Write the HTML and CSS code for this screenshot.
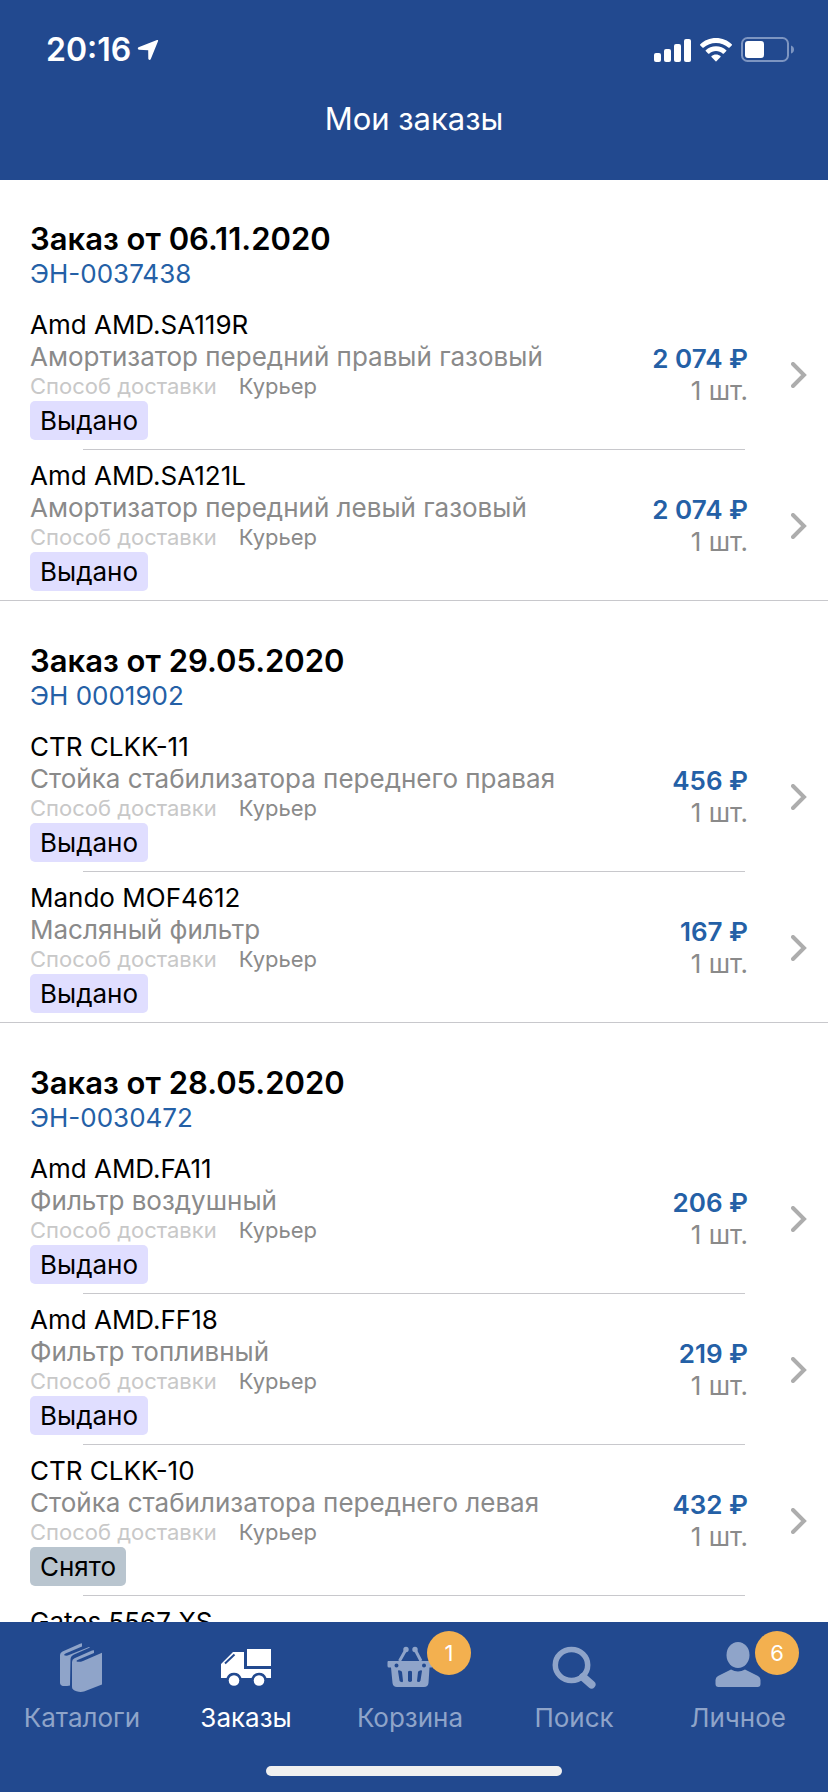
FILE: index.html
```html
<!DOCTYPE html>
<html lang="ru">

<head>
    <meta charset="UTF-8" />
    <meta name="viewport" content="width=device-width, initial-scale=1.0" />
    <title>Мои заказы</title>
    <link rel="stylesheet" href="styles.css">
</head>

<body>
    <header class="header">
        <div class="status-bar">
            <div class="status-left">
                <span class="time">20:16</span>
                <svg class="location" width="22" height="22" viewBox="0 0 22 22">
                    <path d="M1.5 8.2 20 1 Q21.6 .5 21 2.200L13.800 20Q13 21.600 11.700 20.600Q11.300 20.200 11.300 19.500L11.200 11.200 2 10.800Q.8 10.600.8 9.500.8 8.600 1.500 8.200Z" fill="#fff" />
                </svg>
            </div>
            <div class="status-right">
                <svg width="37" height="24" viewBox="0 0 37 24" fill="#fff">
                    <rect x="0" y="15" width="7" height="9" rx="2" />
                    <rect x="10" y="11" width="7" height="13" rx="2" />
                    <rect x="20" y="6" width="7" height="18" rx="2" />
                    <rect x="30" y="1" width="7" height="23" rx="2" />
                </svg>
                <svg width="32" height="24" viewBox="0 0 32 24" fill="#fff">
                    <path d="M16 0C22.200 0 27.800 2.300 32 6.400Q32.200 6.800 31.900 7.200L29.400 9.700Q29 10 28.600 9.700C25 6.500 20.700 4.900 16 4.900S7 6.500 3.400 9.700Q3 10 2.600 9.700L.1 7.200Q-.2 6.800.1 6.400C4.200 2.300 9.800 0 16 0Z" />
                    <path d="M16 8.200C20 8.200 23.500 9.700 26.300 12.200Q26.700 12.700 26.300 13.100L23.700 15.700Q23.300 16 22.900 15.700C20.900 14 18.600 13.100 16 13.100S11.100 14 9.100 15.700Q8.700 16 8.300 15.700L5.700 13.100Q5.300 12.700 5.700 12.200C8.500 9.700 12 8.200 16 8.200Z" />
                    <path d="M16 16.500C17.800 16.500 19.300 17.100 20.500 18.100Q20.900 18.500 20.500 19L16.400 23.200Q16 23.600 15.600 23.200L11.500 19Q11.100 18.500 11.500 18.100C12.700 17.100 14.200 16.500 16 16.500Z" />
                </svg>
                <svg width="53" height="25" viewBox="0 0 53 25">
                    <rect x="1" y="1" width="46" height="23" rx="5.500" fill="none" stroke="#7d95c1" stroke-width="2" />
                    <rect x="4" y="4" width="19" height="17" rx="3" fill="#fff" />
                    <path d="M50 8.500Q53 9.500 53 12.500T50 16.500Z" fill="#7d95c1" />
                </svg>
            </div>
        </div>
        <h1 class="page-title">Мои заказы</h1>
    </header>

    <main class="orders">
        <section class="order">
            <div class="order-head">
                <h2>Заказ от 06.11.2020</h2>
                <p>ЭН-0037438</p>
            </div>
            <ul>
                <li>
                    <a href="#" class="item">
                        <div class="info">
                            <div class="name">Amd AMD.SA119R</div>
                            <div class="desc">Амортизатор передний правый газовый</div>
                            <div class="delivery"><span>Способ доставки</span> <b>Курьер</b></div>
                            <span class="state">Выдано</span>
                        </div>
                        <div class="sum">
                            <div class="price">2 074 ₽</div>
                            <div class="count">1 шт.</div>
                        </div>
                        <svg class="chevron" viewBox="0 0 16 26"><path d="M2 2 13 13 2 24" /></svg>
                    </a>
                </li>
                <li>
                    <a href="#" class="item">
                        <div class="info">
                            <div class="name">Amd AMD.SA121L</div>
                            <div class="desc">Амортизатор передний левый газовый</div>
                            <div class="delivery"><span>Способ доставки</span> <b>Курьер</b></div>
                            <span class="state">Выдано</span>
                        </div>
                        <div class="sum">
                            <div class="price">2 074 ₽</div>
                            <div class="count">1 шт.</div>
                        </div>
                        <svg class="chevron" viewBox="0 0 16 26"><path d="M2 2 13 13 2 24" /></svg>
                    </a>
                </li>
            </ul>
        </section>

        <section class="order">
            <div class="order-head">
                <h2>Заказ от 29.05.2020</h2>
                <p>ЭН 0001902</p>
            </div>
            <ul>
                <li>
                    <a href="#" class="item">
                        <div class="info">
                            <div class="name">CTR CLKK-11</div>
                            <div class="desc">Стойка стабилизатора переднего правая</div>
                            <div class="delivery"><span>Способ доставки</span> <b>Курьер</b></div>
                            <span class="state">Выдано</span>
                        </div>
                        <div class="sum">
                            <div class="price">456 ₽</div>
                            <div class="count">1 шт.</div>
                        </div>
                        <svg class="chevron" viewBox="0 0 16 26"><path d="M2 2 13 13 2 24" /></svg>
                    </a>
                </li>
                <li>
                    <a href="#" class="item">
                        <div class="info">
                            <div class="name">Mando MOF4612</div>
                            <div class="desc">Масляный фильтр</div>
                            <div class="delivery"><span>Способ доставки</span> <b>Курьер</b></div>
                            <span class="state">Выдано</span>
                        </div>
                        <div class="sum">
                            <div class="price">167 ₽</div>
                            <div class="count">1 шт.</div>
                        </div>
                        <svg class="chevron" viewBox="0 0 16 26"><path d="M2 2 13 13 2 24" /></svg>
                    </a>
                </li>
            </ul>
        </section>

        <section class="order">
            <div class="order-head">
                <h2>Заказ от 28.05.2020</h2>
                <p>ЭН-0030472</p>
            </div>
            <ul>
                <li>
                    <a href="#" class="item">
                        <div class="info">
                            <div class="name">Amd AMD.FA11</div>
                            <div class="desc">Фильтр воздушный</div>
                            <div class="delivery"><span>Способ доставки</span> <b>Курьер</b></div>
                            <span class="state">Выдано</span>
                        </div>
                        <div class="sum">
                            <div class="price">206 ₽</div>
                            <div class="count">1 шт.</div>
                        </div>
                        <svg class="chevron" viewBox="0 0 16 26"><path d="M2 2 13 13 2 24" /></svg>
                    </a>
                </li>
                <li>
                    <a href="#" class="item">
                        <div class="info">
                            <div class="name">Amd AMD.FF18</div>
                            <div class="desc">Фильтр топливный</div>
                            <div class="delivery"><span>Способ доставки</span> <b>Курьер</b></div>
                            <span class="state">Выдано</span>
                        </div>
                        <div class="sum">
                            <div class="price">219 ₽</div>
                            <div class="count">1 шт.</div>
                        </div>
                        <svg class="chevron" viewBox="0 0 16 26"><path d="M2 2 13 13 2 24" /></svg>
                    </a>
                </li>
                <li>
                    <a href="#" class="item">
                        <div class="info">
                            <div class="name">CTR CLKK-10</div>
                            <div class="desc">Стойка стабилизатора переднего левая</div>
                            <div class="delivery"><span>Способ доставки</span> <b>Курьер</b></div>
                            <span class="state removed">Снято</span>
                        </div>
                        <div class="sum">
                            <div class="price">432 ₽</div>
                            <div class="count">1 шт.</div>
                        </div>
                        <svg class="chevron" viewBox="0 0 16 26"><path d="M2 2 13 13 2 24" /></svg>
                    </a>
                </li>
                <li>
                    <a href="#" class="item">
                        <div class="info">
                            <div class="name">Gates 5567 XS</div>
                        </div>
                    </a>
                </li>
            </ul>
        </section>
    </main>

    <footer class="footer">
        <nav class="tabs">
            <a href="#" class="tab">
                <svg viewBox="0 0 50 50">
                    <path d="M3 13Q3 10.500 5.500 9.500L23 1.700 25 1.300V4.500L8.500 11.500Q6 13 8 13.500 10 14 12 13L32 5 33 5.500 17 12.500Q13.500 14 13.500 17.500L13 43.500Q3 45.500 3 41Z" />
                    <path d="M15 20Q15 17.500 17.500 16.300L35 8.600 37 8.200V11L20.500 18Q18.500 19.200 20.500 19.700 23 20.200 26 19L45 10.800V42.500L27 49.500Q23.500 50.500 19.500 49.300 15 48 15 45Z" />
                </svg>
                <span>Каталоги</span>
            </a>
            <a href="#" class="tab active">
                <svg viewBox="0 0 50 50">
                    <path d="M26 7H50V24H26Z" />
                    <path d="M0 22 12 10H23V27H50V36H45.500A8 8 0 0 0 30.500 36H20.500A8 8 0 0 0 5.500 36H0Z" />
                    <path d="M4 21.500 13.500 12.500" fill="none" stroke="#22498f" stroke-width="2" />
                    <circle cx="13" cy="38.500" r="5.300" />
                    <circle cx="38" cy="38.500" r="5.300" />
                </svg>
                <span>Заказы</span>
            </a>
            <a href="#" class="tab">
                <svg viewBox="0 0 50 50">
                    <path fill-rule="evenodd" d="M3 19H46.500Q48 19 48 20.500V24Q48 25.500 46.500 25.500H44.500L43.500 41Q43 45 39 45H12Q8 45 7.500 41L6 25.500H4Q2.500 25.500 2.500 24V20.500Q2.500 19 3 19ZM11.500 21.500A2 2 0 1 0 11.500 25.500 2 2 0 1 0 11.500 21.500ZM39 21.500A2 2 0 1 0 39 25.500 2 2 0 1 0 39 21.500ZM13 29Q13 28 15 28.500 17 29 17 30L18 39Q18 40.500 16.500 40 14.500 39.500 14.500 38.500ZM23 29.500Q25 28 27 29.500V39Q25 41 23 39ZM33 30Q33 29 35 28.500 37 28 37 29L35.500 38.500Q35 40 33.500 40 32 40 32 39Z" />
                    <path d="M14.500 19 21 7.500M36 19 30 7.500" fill="none" stroke="currentColor" stroke-width="3" />
                    <circle cx="21" cy="7.500" r="2.700" />
                    <circle cx="30" cy="7.500" r="2.700" />
                </svg>
                <span>Корзина</span>
                <em class="badge">1</em>
            </a>
            <a href="#" class="tab">
                <svg viewBox="0 0 50 50">
                    <ellipse cx="22.500" cy="23" rx="16.200" ry="15.500" fill="none" stroke="currentColor" stroke-width="5.500" />
                    <path d="M34 35 42.500 42.500" fill="none" stroke="currentColor" stroke-width="8" stroke-linecap="round" />
                </svg>
                <span>Поиск</span>
            </a>
            <a href="#" class="tab">
                <svg viewBox="0 0 50 50">
                    <ellipse cx="25" cy="13" rx="11.500" ry="13" />
                    <path d="M18 27.500Q25 31.500 32 27.500L45 34Q47.500 35.500 47.500 38V42Q47.500 45 44.500 45H5.500Q2.500 45 2.500 42V38Q2.500 35.500 5 34Z" />
                </svg>
                <span>Личное</span>
                <em class="badge">6</em>
            </a>
        </nav>
        <div class="home-indicator"></div>
    </footer>
</body>

</html>
```
FILE: styles.css
```css
* {
    box-sizing: border-box;
}

body {
    display: flex;
    flex-direction: column;
    height: 100vh;
    margin: 0;
    font-family: Inter, 'Noto Sans', sans-serif;
    font-size: 26px;
    background-color: #fff;
    color: #000;
}

a {
    color: inherit;
    text-decoration: none;
}

h1,
h2,
p,
ul {
    margin: 0;
    padding: 0;
}

ul {
    list-style: none;
}

.header {
    flex: none;
    padding: 30px 34px 41px 46px;
    background-color: #22498f;
    color: #fff;
}

.status-bar,
.status-left,
.status-right {
    display: flex;
    align-items: center;
}

.status-bar {
    justify-content: space-between;
    height: 39px;
}

.status-left {
    gap: 6px;
}

.status-right {
    gap: 9px;
}

.time {
    font-size: 32px;
    font-weight: 600;
}

.page-title {
    margin: 30px 0 0 -12px;
    font-size: 31px;
    font-weight: 400;
    line-height: 40px;
    text-align: center;
}

.orders {
    flex: 1;
    min-height: 0;
    overflow-y: auto;
    scrollbar-width: none;
}

.order {
    border-bottom: 1px solid #c8c8cc;
}

.order + .order {
    padding-top: 1px;
}

.order-head {
    padding: 40px 30px 9px;
}

.order-head h2 {
    font-size: 31px;
    font-weight: 600;
    line-height: 38px;
}

.order-head p {
    line-height: 32px;
    color: #2460a6;
}

.order li + li::before {
    content: "";
    display: block;
    height: 1px;
    margin: 0 83px;
    background-color: #c8c8cc;
}

.item {
    display: flex;
    align-items: center;
    padding: 10px 21px 9px 30px;
}

.info {
    flex: 1;
}

.name {
    line-height: 32px;
}

.desc {
    line-height: 31px;
    color: #8a8a8a;
}

.delivery {
    display: flex;
    gap: 22px;
    font-size: 22px;
    line-height: 28px;
    color: #c8c8c8;
}

.delivery b {
    font-weight: 400;
    color: #8a8a8a;
}

.state {
    display: block;
    width: fit-content;
    margin-top: 1px;
    padding: 0 10px;
    border-radius: 5px;
    line-height: 39px;
    background-color: #e0deff;
}

.state.removed {
    background-color: #b9c5cf;
}

.sum {
    text-align: right;
    line-height: 32px;
    color: #8a8a8a;
}

.price {
    font-weight: 600;
    color: #2460a6;
}

.chevron {
    width: 16px;
    height: 26px;
    margin-left: 43px;
    fill: none;
    stroke: #adadad;
    stroke-width: 4px;
    stroke-linecap: round;
}

.footer {
    flex: none;
    padding: 20px 0 16px;
    background-color: #22498f;
}

.tabs {
    display: flex;
    padding-right: 8px;
}

.tab {
    position: relative;
    flex: 1;
    display: flex;
    flex-direction: column;
    align-items: center;
    gap: 8px;
    line-height: 36px;
    color: #8fa4c9;
}

.tab svg {
    width: 50px;
    height: 50px;
    fill: currentColor;
}

.tab.active {
    color: #fff;
}

.badge {
    position: absolute;
    top: -11px;
    left: calc(50% + 17px);
    width: 44px;
    border-radius: 50%;
    background-color: #f3b04f;
    color: #fff;
    font-size: 22px;
    font-style: normal;
    line-height: 44px;
    text-align: center;
}

.home-indicator {
    width: 296px;
    height: 10px;
    margin: 30px auto 0;
    border-radius: 5px;
    background-color: #f0f0f0;
}
```
